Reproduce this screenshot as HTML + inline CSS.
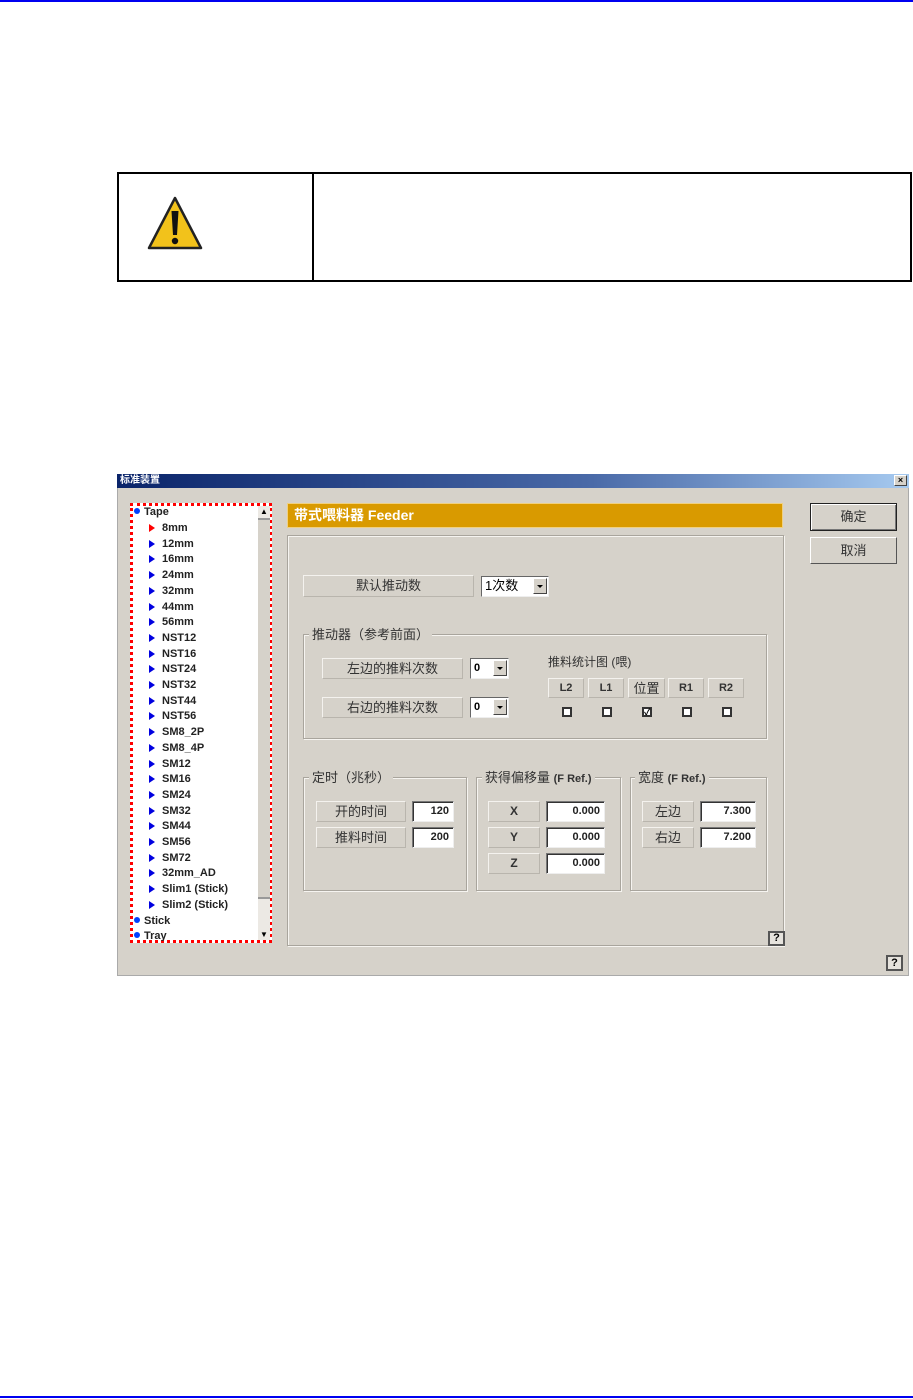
<!DOCTYPE html>
<html><head><meta charset="utf-8"><style>
body{margin:0;width:913px;height:1399px;background:#fff;position:relative;overflow:hidden;font-family:"Liberation Sans","Noto Sans CJK SC",sans-serif}
.a{position:absolute;box-sizing:border-box}
.lb{position:absolute;box-sizing:border-box;background:#d6d2ca;border:1px solid #f4f2ee;border-right-color:#b9b5ad;border-bottom-color:#b9b5ad;font-size:13px;color:#333;text-align:center;line-height:19px}
.in{position:absolute;box-sizing:border-box;background:#fff;border:1px solid #777;border-right-color:#eee;border-bottom-color:#eee;box-shadow:inset 1px 1px 0 #333;font-size:11px;font-weight:bold;color:#222;text-align:right;padding-right:4px;line-height:18px}
.cb{position:absolute;box-sizing:border-box;background:#fff;border:1px solid #666;border-right-color:#eee;border-bottom-color:#eee;font-size:11px;font-weight:bold;line-height:18px;padding-left:3px}
.cb i{position:absolute;right:1px;top:1px;width:14px;height:16px;background:#d6d2ca;border:1px solid #fff;border-right-color:#444;border-bottom-color:#444;box-sizing:border-box}
.cb i:after{content:"";position:absolute;left:3px;top:6px;border:3px solid transparent;border-top:3px solid #000}
.gb{position:absolute;box-sizing:border-box;border:1px solid #a9a59d;box-shadow:1px 1px 0 #f6f4f0,inset 1px 1px 0 #f6f4f0}
.gt{position:absolute;background:#d6d2ca;font-size:13px;color:#333;padding:0 3px;line-height:15px}
.ck{position:absolute;width:10px;height:10px;border:2px solid #333;box-sizing:border-box;background:#fff}
.tr{position:absolute;left:150px;font-size:11px;font-weight:bold;color:#222;line-height:14px}
.tr:before{content:"";position:absolute;left:-0px;top:3px;border:4px solid transparent;border-left:6px solid #0000e0;margin-left:-1px}
.tr.red:before{border-left-color:#f00}
.tr span{margin-left:12px}
</style></head><body>
<div class="a" style="left:0;top:0;width:913px;height:2px;background:#0000f0"></div>
<div class="a" style="left:0;top:1396px;width:913px;height:2px;background:#0000f0"></div>

<div class="a" style="left:117px;top:172px;width:795px;height:110px;border:2px solid #000"></div>
<div class="a" style="left:312px;top:172px;width:2px;height:110px;background:#000"></div>
<svg class="a" style="left:147px;top:196px" width="56" height="54" viewBox="0 0 56 54"><polygon points="28,2 54,52 2,52" fill="#f2c21b" stroke="#222" stroke-width="2.5" stroke-linejoin="round"/><path d="M24.5 15 L31.5 15 L30 39 L26 39 Z" fill="#111"/><circle cx="28" cy="45" r="3.2" fill="#111"/></svg>

<div class="a" style="left:117px;top:474px;width:792px;height:502px;background:#d6d2ca;border:1px solid #aaa"></div>
<div class="a" style="left:117px;top:474px;width:792px;height:14px;background:linear-gradient(90deg,#0a246a,#4a6aa8 60%,#a6caf0)"></div>
<div class="a" style="left:120px;top:474px;font-size:10px;font-weight:bold;color:#fff;line-height:14px">标准装置</div>
<div class="a" style="left:894px;top:475px;width:13px;height:11px;background:#d6d2ca;border:1px solid #fff;border-right-color:#444;border-bottom-color:#444;font-size:9px;line-height:9px;text-align:center;font-weight:bold">×</div>

<div class="a" style="left:130px;top:503px;width:142px;height:440px;background:#fff;border:3px dotted #f00"></div>
<div class="a" style="left:258px;top:506px;width:12px;height:434px;background:#ece9e4"></div>
<div class="a" style="left:258px;top:518px;width:12px;height:381px;background:#d6d2ca;border-top:2px solid #999;border-bottom:2px solid #999"></div>
<div class="a" style="left:260px;top:507px;font-size:8px;line-height:9px">▲</div>
<div class="a" style="left:260px;top:930px;font-size:8px;line-height:9px">▼</div>
<div class="a" style="left:134px;top:505px;font-size:11px;font-weight:bold;color:#222;line-height:14px"><span style="display:inline-block;width:6px;height:6px;border-radius:50%;background:#0040ff;margin-right:4px;vertical-align:1px"></span>Tape</div>
<div class="tr red" style="top:521px"><span>8mm</span></div>
<div class="tr" style="top:537px"><span>12mm</span></div>
<div class="tr" style="top:552px"><span>16mm</span></div>
<div class="tr" style="top:568px"><span>24mm</span></div>
<div class="tr" style="top:584px"><span>32mm</span></div>
<div class="tr" style="top:600px"><span>44mm</span></div>
<div class="tr" style="top:615px"><span>56mm</span></div>
<div class="tr" style="top:631px"><span>NST12</span></div>
<div class="tr" style="top:647px"><span>NST16</span></div>
<div class="tr" style="top:662px"><span>NST24</span></div>
<div class="tr" style="top:678px"><span>NST32</span></div>
<div class="tr" style="top:694px"><span>NST44</span></div>
<div class="tr" style="top:709px"><span>NST56</span></div>
<div class="tr" style="top:725px"><span>SM8_2P</span></div>
<div class="tr" style="top:741px"><span>SM8_4P</span></div>
<div class="tr" style="top:757px"><span>SM12</span></div>
<div class="tr" style="top:772px"><span>SM16</span></div>
<div class="tr" style="top:788px"><span>SM24</span></div>
<div class="tr" style="top:804px"><span>SM32</span></div>
<div class="tr" style="top:819px"><span>SM44</span></div>
<div class="tr" style="top:835px"><span>SM56</span></div>
<div class="tr" style="top:851px"><span>SM72</span></div>
<div class="tr" style="top:866px"><span>32mm_AD</span></div>
<div class="tr" style="top:882px"><span>Slim1 (Stick)</span></div>
<div class="tr" style="top:898px"><span>Slim2 (Stick)</span></div>
<div class="a" style="left:134px;top:914px;font-size:11px;font-weight:bold;color:#222;line-height:14px"><span style="display:inline-block;width:6px;height:6px;border-radius:50%;background:#0040ff;margin-right:4px;vertical-align:1px"></span>Stick</div>
<div class="a" style="left:134px;top:930px;font-size:11px;font-weight:bold;color:#222;line-height:13px;height:11px;overflow:hidden"><span style="display:inline-block;width:6px;height:6px;border-radius:50%;background:#0040ff;margin-right:4px;vertical-align:1px"></span>Tray</div>

<div class="a" style="left:287px;top:503px;width:496px;height:25px;background:#d99a00;border:1px solid #f0d080;color:#fff;font-size:14px;font-weight:bold;line-height:23px;padding-left:6px">带式喂料器 Feeder</div>
<div class="a" style="left:287px;top:535px;width:497px;height:411px;border:1px solid #a9a59d;box-shadow:inset 1px 1px 0 #f6f4f0,1px 1px 0 #f6f4f0"></div>

<div class="lb" style="left:303px;top:575px;width:171px;height:22px">默认推动数</div>
<div class="cb" style="left:481px;top:576px;width:68px;height:21px;font-weight:normal;font-size:13px">1次数<i></i></div>

<div class="gb" style="left:303px;top:634px;width:464px;height:105px"></div>
<div class="gt" style="left:309px;top:627px">推动器（参考前面）</div>
<div class="lb" style="left:322px;top:658px;width:141px;height:21px">左边的推料次数</div>
<div class="cb" style="left:470px;top:658px;width:39px;height:21px">0<i></i></div>
<div class="lb" style="left:322px;top:697px;width:141px;height:21px">右边的推料次数</div>
<div class="cb" style="left:470px;top:697px;width:39px;height:21px">0<i></i></div>
<div class="a" style="left:548px;top:655px;font-size:12px;color:#333;line-height:15px">推料统计图 (喂)</div>
<div class="lb" style="left:548px;top:678px;width:36px;height:20px;font-size:11px;font-weight:bold">L2</div>
<div class="lb" style="left:588px;top:678px;width:36px;height:20px;font-size:11px;font-weight:bold">L1</div>
<div class="lb" style="left:628px;top:678px;width:37px;height:20px">位置</div>
<div class="lb" style="left:668px;top:678px;width:36px;height:20px;font-size:11px;font-weight:bold">R1</div>
<div class="lb" style="left:708px;top:678px;width:36px;height:20px;font-size:11px;font-weight:bold">R2</div>
<div class="ck" style="left:562px;top:707px"></div>
<div class="ck" style="left:602px;top:707px"></div>
<div class="ck" style="left:642px;top:707px;font-size:9px;line-height:6px;text-align:center;font-weight:bold">✓</div>
<div class="ck" style="left:682px;top:707px"></div>
<div class="ck" style="left:722px;top:707px"></div>

<div class="gb" style="left:303px;top:777px;width:164px;height:114px"></div>
<div class="gt" style="left:309px;top:770px">定时（兆秒）</div>
<div class="lb" style="left:316px;top:801px;width:90px;height:21px">开的时间</div>
<div class="in" style="left:412px;top:801px;width:42px;height:21px">120</div>
<div class="lb" style="left:316px;top:827px;width:90px;height:21px">推料时间</div>
<div class="in" style="left:412px;top:827px;width:42px;height:21px">200</div>

<div class="gb" style="left:476px;top:777px;width:145px;height:114px"></div>
<div class="gt" style="left:482px;top:770px">获得偏移量 <b style="font-size:11px">(F Ref.)</b></div>
<div class="lb" style="left:488px;top:801px;width:52px;height:21px;font-weight:bold;font-size:12px">X</div>
<div class="in" style="left:546px;top:801px;width:59px;height:21px">0.000</div>
<div class="lb" style="left:488px;top:827px;width:52px;height:21px;font-weight:bold;font-size:12px">Y</div>
<div class="in" style="left:546px;top:827px;width:59px;height:21px">0.000</div>
<div class="lb" style="left:488px;top:853px;width:52px;height:21px;font-weight:bold;font-size:12px">Z</div>
<div class="in" style="left:546px;top:853px;width:59px;height:21px">0.000</div>

<div class="gb" style="left:630px;top:777px;width:137px;height:114px"></div>
<div class="gt" style="left:635px;top:770px">宽度 <b style="font-size:11px">(F Ref.)</b></div>
<div class="lb" style="left:642px;top:801px;width:52px;height:21px">左边</div>
<div class="in" style="left:700px;top:801px;width:56px;height:21px">7.300</div>
<div class="lb" style="left:642px;top:827px;width:52px;height:21px">右边</div>
<div class="in" style="left:700px;top:827px;width:56px;height:21px">7.200</div>

<div class="a" style="left:768px;top:931px;width:17px;height:15px;border:2px solid #555;background:#e6e3dd;font-size:11px;font-weight:bold;text-align:center;line-height:11px">?</div>
<div class="a" style="left:886px;top:955px;width:17px;height:16px;border:2px solid #555;background:#e6e3dd;font-size:11px;font-weight:bold;text-align:center;line-height:12px">?</div>

<div class="a" style="left:810px;top:503px;width:87px;height:28px;border:1px solid #222;box-shadow:inset 1px 1px 0 #fff,inset -1px -1px 0 #777;background:#d6d2ca;font-size:13px;text-align:center;line-height:26px;color:#333">确定</div>
<div class="a" style="left:810px;top:537px;width:87px;height:27px;border:1px solid #fff;border-right-color:#555;border-bottom-color:#555;background:#d6d2ca;font-size:13px;text-align:center;line-height:25px;color:#333">取消</div>
</body></html>
